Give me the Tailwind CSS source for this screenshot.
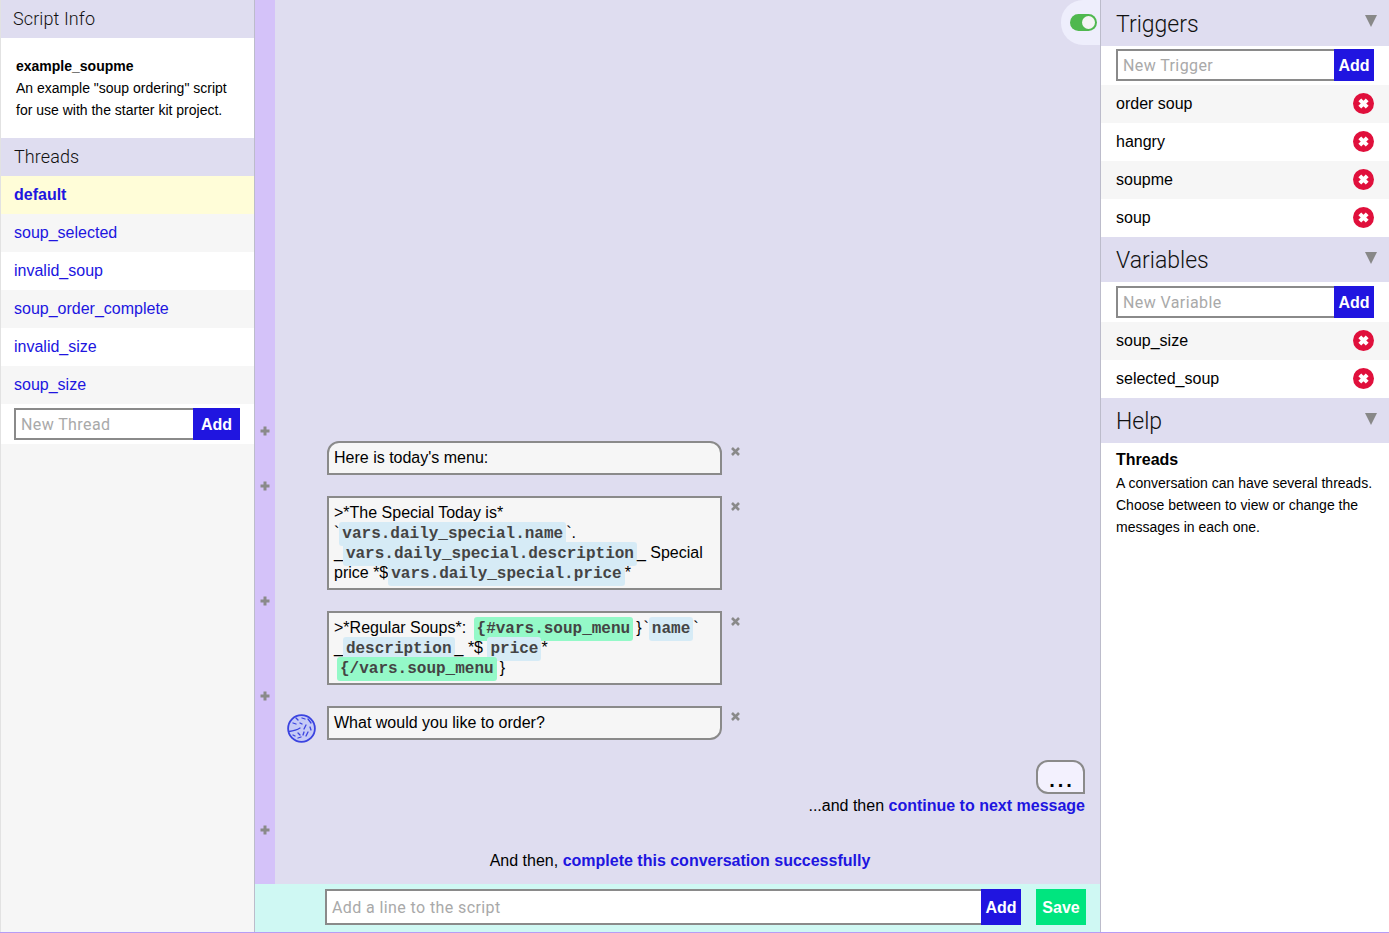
<!doctype html>
<html><head><meta charset="utf-8"><script src="https://cdn.jsdelivr.net/npm/@tailwindcss/browser@4"></script></head>
<body class="m-0">
<div class="h-[933px] w-[1389px] overflow-hidden flex flex-col font-['Liberation_Sans',Arial,sans-serif] text-[16px] leading-5 text-black border-b border-[#b79cf5] bg-white">
<div class="flex-1 flex min-h-0">

<!-- LEFT -->
<aside class="w-[255px] shrink-0 bg-[#f6f6f6] border-r border-[#bcbccb] border-l border-l-[#e2e2e2] flex flex-col">
  <div class="h-[38px] bg-[#dfddf0] pl-3 pb-[1px] flex items-center font-['Roboto',sans-serif] font-light text-[18px] tracking-[0.1px] text-[#111]">Script Info</div>
  <div class="h-[100px] bg-white pl-[15px] pt-[17px] text-[14px] leading-[22px]">
    <div class="font-bold">example_soupme</div>
    <div>An example "soup ordering" script<br>for use with the starter kit project.</div>
  </div>
  <div class="h-[38px] bg-[#dfddf0] pl-[13px] pb-[1px] flex items-center font-['Roboto',sans-serif] font-light text-[18px] tracking-[0.1px] text-[#111]">Threads</div>
  <a class="h-[38px] pl-[13px] flex items-center bg-[#fffdd8] text-[#2015e0] font-bold">default</a>
  <a class="h-[38px] pl-[13px] flex items-center bg-[#f6f6f6] text-[#2015e0]">soup_selected</a>
  <a class="h-[38px] pl-[13px] flex items-center bg-white text-[#2015e0]">invalid_soup</a>
  <a class="h-[38px] pl-[13px] flex items-center bg-[#f6f6f6] text-[#2015e0]">soup_order_complete</a>
  <a class="h-[38px] pl-[13px] flex items-center bg-white text-[#2015e0]">invalid_size</a>
  <a class="h-[38px] pl-[13px] flex items-center bg-[#f6f6f6] text-[#2015e0]">soup_size</a>
  <div class="bg-white pt-[4px] pb-[4px] pl-[13px] pr-[14px]">
    <div class="h-8 flex">
      <div class="flex-1 border-2 border-r-0 border-[#8a8a8a] bg-white pl-[5px] pt-[2px] flex items-center font-['Roboto',sans-serif] tracking-[0.4px] text-[#a9a9a9]">New Thread</div>
      <button class="w-[47px] pt-[1px] bg-[#2015e0] text-white font-bold">Add</button>
    </div>
  </div>
</aside>

<!-- CENTER -->
<main class="flex-1 min-w-0 flex flex-col bg-[#dfddf0] relative">
  <div class="flex-1 min-h-0 flex flex-col">
    <div class="flex-1 flex"><div class="w-5 bg-[#d4c2f9]"></div></div>

    <div class="flex h-[21px]"><div class="w-5 bg-[#d4c2f9] flex items-center justify-center"><svg width="10" height="10" viewBox="0 0 10 10"><path d="M5 .5v9M.5 5h9" stroke="#8a8a8a" stroke-width="3"/></svg></div></div>
    <div class="flex"><div class="w-5 bg-[#d4c2f9]"></div>
      <div class="w-[52px]"></div>
      <div class="w-[395px] border-2 border-[#8a8a8a] bg-[#f6f6f6] px-[5px] py-[5px] rounded-t-[12px]">Here is today's menu:</div>
      <svg class="ml-[9px] mt-[6px]" width="9" height="9" viewBox="0 0 9 9"><path d="M1 1l7 7M8 1L1 8" stroke="#8a8a8a" stroke-width="2.6"/></svg>
    </div>

    <div class="flex h-[21px]"><div class="w-5 bg-[#d4c2f9] flex items-center justify-center"><svg width="10" height="10" viewBox="0 0 10 10"><path d="M5 .5v9M.5 5h9" stroke="#8a8a8a" stroke-width="3"/></svg></div></div>
    <div class="flex"><div class="w-5 bg-[#d4c2f9]"></div>
      <div class="w-[52px]"></div>
      <div class="w-[395px] border-2 border-[#8a8a8a] bg-[#f6f6f6] px-[5px] py-[5px]">&gt;*The Special Today is*<br>`<span class="leading-[14px] font-['Liberation_Mono',monospace] font-bold text-[#444] bg-[#d6ebf6] rounded-[3px] px-[3px] py-[3px]">vars.daily_special.name</span>`.<br>_<span class="leading-[14px] font-['Liberation_Mono',monospace] font-bold text-[#444] bg-[#d6ebf6] rounded-[3px] px-[3px] py-[3px]">vars.daily_special.description</span>_ Special price *$<span class="leading-[14px] font-['Liberation_Mono',monospace] font-bold text-[#444] bg-[#d6ebf6] rounded-[3px] px-[3px] py-[3px]">vars.daily_special.price</span>*</div>
      <svg class="ml-[9px] mt-[6px]" width="9" height="9" viewBox="0 0 9 9"><path d="M1 1l7 7M8 1L1 8" stroke="#8a8a8a" stroke-width="2.6"/></svg>
    </div>

    <div class="flex h-[21px]"><div class="w-5 bg-[#d4c2f9] flex items-center justify-center"><svg width="10" height="10" viewBox="0 0 10 10"><path d="M5 .5v9M.5 5h9" stroke="#8a8a8a" stroke-width="3"/></svg></div></div>
    <div class="flex"><div class="w-5 bg-[#d4c2f9]"></div>
      <div class="w-[52px]"></div>
      <div class="w-[395px] border-2 border-[#8a8a8a] bg-[#f6f6f6] px-[5px] py-[5px]">&gt;*Regular Soups*: <span class="ml-[3px] leading-[14px] font-['Liberation_Mono',monospace] font-bold text-[#444] bg-[#94f9c8] rounded-[3px] px-[3px] py-[3px]">{#vars.soup_menu</span><span class="ml-[3px]">}</span><span class="ml-[2px]">`</span><span class="leading-[14px] font-['Liberation_Mono',monospace] font-bold text-[#444] bg-[#d6ebf6] rounded-[3px] px-[3px] py-[3px]">name</span>`<br>_<span class="leading-[14px] font-['Liberation_Mono',monospace] font-bold text-[#444] bg-[#d6ebf6] rounded-[3px] px-[3px] py-[3px]">description</span>_ *$ <span class="leading-[14px] font-['Liberation_Mono',monospace] font-bold text-[#444] bg-[#d6ebf6] rounded-[3px] px-[3px] py-[3px]">price</span>*<br><span class="ml-[3px] leading-[14px] font-['Liberation_Mono',monospace] font-bold text-[#444] bg-[#94f9c8] rounded-[3px] px-[3px] py-[3px]">{/vars.soup_menu</span><span class="ml-[3px]">}</span></div>
      <svg class="ml-[9px] mt-[6px]" width="9" height="9" viewBox="0 0 9 9"><path d="M1 1l7 7M8 1L1 8" stroke="#8a8a8a" stroke-width="2.6"/></svg>
    </div>

    <div class="flex h-[21px]"><div class="w-5 bg-[#d4c2f9] flex items-center justify-center"><svg width="10" height="10" viewBox="0 0 10 10"><path d="M5 .5v9M.5 5h9" stroke="#8a8a8a" stroke-width="3"/></svg></div></div>
    <div class="flex"><div class="w-5 bg-[#d4c2f9]"></div>
      <div class="w-[52px] flex items-end pl-[12px]">
        <svg class="mb-[-3px]" width="29" height="29" viewBox="0 0 29 29" fill="none" stroke="#3b43e0" stroke-width="1.3" stroke-linecap="round"><circle cx="14.500" cy="14.500" r="13.400" fill="#c6caf6" stroke-width="1.800"/><path d="M2 17.500c4-.5 8-1.500 11-3.500M9 4l2 2M15 4l3 1M21 5l3 4M6 9l3 1M13 9l2 1M19 11l-2 4M23 13l1 3M6 21l2 1M11 19l2 2M17 18l-1 3M21 18l-2 4M11 24l3-1"/></svg>
      </div>
      <div class="w-[395px] border-2 border-[#8a8a8a] bg-[#f6f6f6] px-[5px] py-[5px] rounded-br-[12px]">What would you like to order?</div>
      <svg class="ml-[9px] mt-[6px]" width="9" height="9" viewBox="0 0 9 9"><path d="M1 1l7 7M8 1L1 8" stroke="#8a8a8a" stroke-width="2.6"/></svg>
    </div>

    <div class="flex h-[79px]"><div class="w-5 bg-[#d4c2f9]"></div>
      <div class="flex-1 pr-[15px] pt-5 flex flex-col items-end">
        <div class="w-[49px] h-[34px] border-2 border-[#8a8a8a] bg-[#f3f1fe] rounded-t-[12px] rounded-bl-[12px] pl-[3px] text-center font-bold text-[20px] tracking-[3px] leading-[36px]">...</div>
        <div class="mt-[2px]">...and then <a class="font-bold text-[#2015e0]">continue to next message</a></div>
      </div>
    </div>

    <div class="flex h-[21px]"><div class="w-5 bg-[#d4c2f9] flex items-center justify-center"><svg width="10" height="10" viewBox="0 0 10 10"><path d="M5 .5v9M.5 5h9" stroke="#8a8a8a" stroke-width="3"/></svg></div></div>
    <div class="flex h-[44px]"><div class="w-5 bg-[#d4c2f9]"></div>
      <div class="flex-1 pr-[15px] pt-[11px] text-center">And then, <a class="font-bold text-[#2015e0]">complete this conversation successfully</a></div>
    </div>
  </div>

  <div class="h-[48px] bg-[#cff8f3] flex items-start pt-[5px] pl-[70px] pr-[14px]">
    <div class="w-[656px] h-9 border-2 border-r-0 border-[#8a8a8a] bg-white pl-[5px] pt-[2px] flex items-center font-['Roboto',sans-serif] tracking-[0.4px] text-[#a9a9a9]">Add a line to the script</div>
    <button class="w-10 h-9 pt-[1px] bg-[#2015e0] text-white font-bold">Add</button>
    <button class="ml-[15px] w-[50px] h-9 pt-[1px] bg-[#00e57f] text-white font-bold">Save</button>
  </div>

  <div class="absolute right-0 top-0 w-[39px] h-[45px] bg-[#eeeefc] rounded-l-[22px] flex items-center justify-end pr-[3px]">
    <div class="w-[27px] h-[17px] rounded-full bg-[#4fb84f] flex items-center justify-end pr-[2px]"><div class="w-[13px] h-[13px] rounded-full bg-[#f4f4f4]"></div></div>
  </div>
</main>

<!-- RIGHT -->
<aside class="w-[289px] shrink-0 border-l border-[#bcbccb] bg-white flex flex-col">
  <div class="h-[46px] bg-[#dfddf0] pl-[15px] pr-3 flex items-center justify-between font-['Roboto',sans-serif] font-light text-[23px] text-[#111]"><span class="mt-[3px]">Triggers</span><svg class="mb-[4px]" width="12" height="12" viewBox="0 0 12 12"><path d="M0 0h12L6 12z" fill="#888"/></svg></div>
  <div class="h-[39px] pl-[15px] pr-[15px] pt-[3px]"><div class="h-8 flex"><div class="flex-1 border-2 border-r-0 border-[#8a8a8a] bg-white pl-[5px] pt-[2px] flex items-center font-['Roboto',sans-serif] tracking-[0.4px] text-[#a9a9a9]">New Trigger</div><button class="w-10 pt-[1px] bg-[#2015e0] text-white font-bold">Add</button></div></div>
  <div class="h-[38px] bg-[#f6f6f6] pl-[15px] pr-[15px] flex items-center justify-between">order soup<svg class="mb-[1px]" width="21" height="21" viewBox="0 0 21 21"><circle cx="10.500" cy="10.500" r="10.500" fill="#e0103c"/><path d="M6.800 6.800l7.400 7.400M14.200 6.800l-7.400 7.400" stroke="#fff" stroke-width="4"/></svg></div>
  <div class="h-[38px] bg-white pl-[15px] pr-[15px] flex items-center justify-between">hangry<svg class="mb-[1px]" width="21" height="21" viewBox="0 0 21 21"><circle cx="10.500" cy="10.500" r="10.500" fill="#e0103c"/><path d="M6.800 6.800l7.400 7.400M14.200 6.800l-7.400 7.400" stroke="#fff" stroke-width="4"/></svg></div>
  <div class="h-[38px] bg-[#f6f6f6] pl-[15px] pr-[15px] flex items-center justify-between">soupme<svg class="mb-[1px]" width="21" height="21" viewBox="0 0 21 21"><circle cx="10.500" cy="10.500" r="10.500" fill="#e0103c"/><path d="M6.800 6.800l7.400 7.400M14.200 6.800l-7.400 7.400" stroke="#fff" stroke-width="4"/></svg></div>
  <div class="h-[38px] bg-white pl-[15px] pr-[15px] flex items-center justify-between">soup<svg class="mb-[1px]" width="21" height="21" viewBox="0 0 21 21"><circle cx="10.500" cy="10.500" r="10.500" fill="#e0103c"/><path d="M6.800 6.800l7.400 7.400M14.200 6.800l-7.400 7.400" stroke="#fff" stroke-width="4"/></svg></div>
  <div class="h-[45px] bg-[#dfddf0] pl-[15px] pr-3 flex items-center justify-between font-['Roboto',sans-serif] font-light text-[23px] text-[#111]"><span class="mt-[3px]">Variables</span><svg class="mb-[4px]" width="12" height="12" viewBox="0 0 12 12"><path d="M0 0h12L6 12z" fill="#888"/></svg></div>
  <div class="h-[40px] pl-[15px] pr-[15px] pt-[4px]"><div class="h-8 flex"><div class="flex-1 border-2 border-r-0 border-[#8a8a8a] bg-white pl-[5px] pt-[2px] flex items-center font-['Roboto',sans-serif] tracking-[0.4px] text-[#a9a9a9]">New Variable</div><button class="w-10 pt-[1px] bg-[#2015e0] text-white font-bold">Add</button></div></div>
  <div class="h-[38px] bg-[#f6f6f6] pl-[15px] pr-[15px] flex items-center justify-between">soup_size<svg class="mb-[1px]" width="21" height="21" viewBox="0 0 21 21"><circle cx="10.500" cy="10.500" r="10.500" fill="#e0103c"/><path d="M6.800 6.800l7.400 7.400M14.200 6.800l-7.400 7.400" stroke="#fff" stroke-width="4"/></svg></div>
  <div class="h-[38px] bg-white pl-[15px] pr-[15px] flex items-center justify-between">selected_soup<svg class="mb-[1px]" width="21" height="21" viewBox="0 0 21 21"><circle cx="10.500" cy="10.500" r="10.500" fill="#e0103c"/><path d="M6.800 6.800l7.400 7.400M14.200 6.800l-7.400 7.400" stroke="#fff" stroke-width="4"/></svg></div>
  <div class="h-[45px] bg-[#dfddf0] pl-[15px] pr-3 flex items-center justify-between font-['Roboto',sans-serif] font-light text-[23px] text-[#111]"><span class="mt-[3px]">Help</span><svg class="mb-[4px]" width="12" height="12" viewBox="0 0 12 12"><path d="M0 0h12L6 12z" fill="#888"/></svg></div>
  <div class="pl-[15px] pr-2 pt-[7px]">
    <div class="font-bold leading-[20px] mb-[2px]">Threads</div>
    <div class="text-[14px] leading-[22px]">A conversation can have several threads. Choose between to view or change the messages in each one.</div>
  </div>
</aside>
</div>
</div>
</body></html>
